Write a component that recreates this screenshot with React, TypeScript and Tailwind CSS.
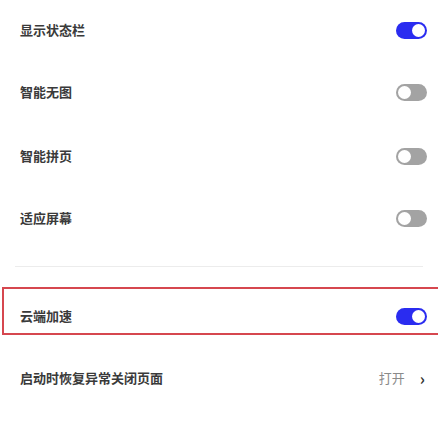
const font = { fontFamily: '"Noto Sans CJK SC", "Noto Sans", sans-serif' }

function Toggle({ on }: { on: boolean }) {
  return on ? (
    <div className="w-[31px] h-[17px] rounded-full bg-[#2a2cf0] flex items-center justify-end pr-[2px]">
      <div className="w-[13px] h-[13px] rounded-full bg-white" />
    </div>
  ) : (
    <div className="w-[31px] h-[17px] rounded-full bg-[#a3a3a3] flex items-center pl-[2px]">
      <div className="w-[13px] h-[13px] rounded-full bg-white" />
    </div>
  )
}

function Row({ label, on, h }: { label: string; on: boolean; h: string }) {
  return (
    <div className={`flex items-center justify-between pl-5 pr-[11px] ${h}`}>
      <span className="text-[13px] font-bold text-[#3a3a3a]">{label}</span>
      <Toggle on={on} />
    </div>
  )
}

export default function App() {
  return (
    <div className="w-[438px] h-[426px] bg-white overflow-hidden" style={font}>
      <Row label="显示状态栏" on={true} h="h-[60px]" />
      <Row label="智能无图" on={false} h="h-[64px]" />
      <Row label="智能拼页" on={false} h="h-[64px]" />
      <Row label="适应屏幕" on={false} h="h-[60px]" />

      {/* divider */}
      <div className="h-[18px]" />
      <div className="mx-[15px] h-px bg-[#ececec]" />
      <div className="h-[20px]" />

      {/* highlighted row */}
      <div className="ml-[2px] h-[48px] border-2 border-r-0 border-[#d6474f] flex items-center justify-between pl-[16px] pr-[11px] pt-[10px]">
        <span className="text-[13px] font-bold text-[#3a3a3a]">云端加速</span>
        <Toggle on={true} />
      </div>

      <div className="flex items-center justify-between pl-5 pr-[13px] h-[62px] mt-[12px]">
        <span className="text-[13px] font-bold text-[#3a3a3a]">启动时恢复异常关闭页面</span>
        <div className="flex items-center gap-[15px]">
          <span className="text-[13px] text-[#8a8a8a]">打开</span>
          <span className="text-[16px] font-bold text-[#333] leading-none">›</span>
        </div>
      </div>
    </div>
  )
}
